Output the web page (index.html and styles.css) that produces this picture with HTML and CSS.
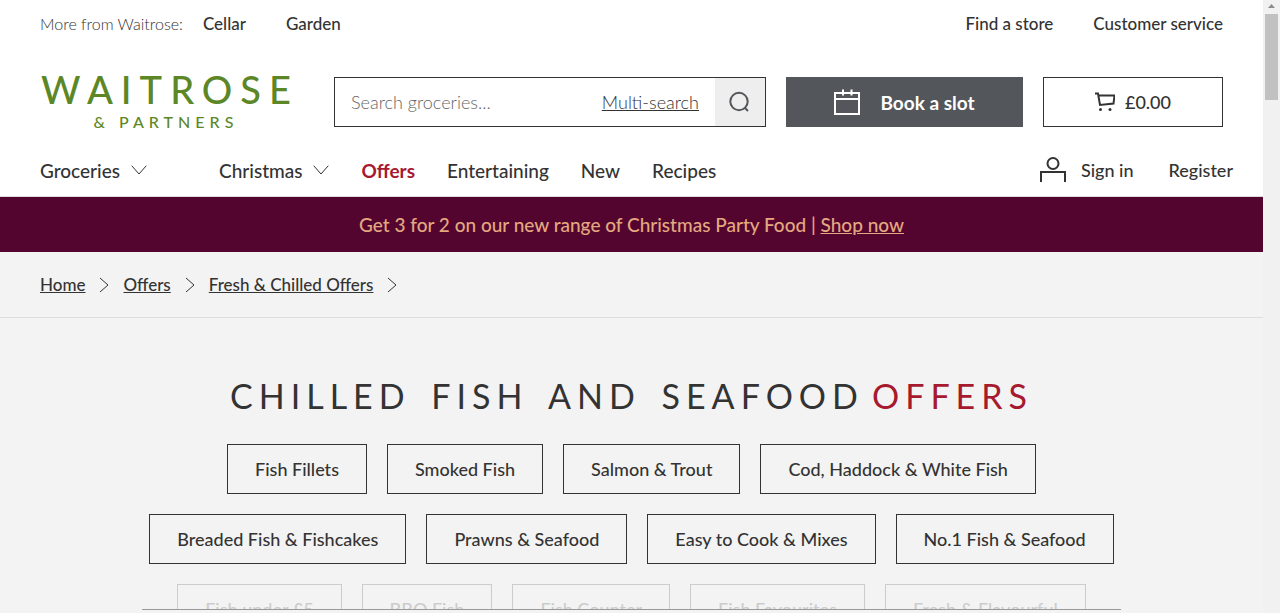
FILE: index.html
```
<!DOCTYPE html>
<html lang="en">
<head>
    <meta charset="UTF-8">
    <meta name="viewport" content="width=device-width, initial-scale=1.0">
    <title>Chilled Fish and Seafood Offers | Waitrose &amp; Partners</title>
    <link rel="stylesheet" href="styles.css">
</head>
<body>
<div class="page">
    <header>
        <div class="top-bar">
            <span class="more-from">More from Waitrose:</span>
            <a href="#">Cellar</a>
            <a href="#">Garden</a>
            <a href="#" class="push-right">Find a store</a>
            <a href="#">Customer service</a>
        </div>

        <div class="main-bar">
            <a href="#" class="logo">
                <span class="logo-name">WAITROSE</span>
                <span class="logo-sub">&amp; PARTNERS</span>
            </a>
            <form class="search">
                <input type="text" aria-label="Search groceries" placeholder="Search groceries...">
                <a href="#">Multi-search</a>
                <button type="button" aria-label="Search">
                    <svg width="22" height="22" viewBox="0 0 22 22">
                        <circle cx="10" cy="10.5" r="8.700"/>
                        <path d="M15.5 16.5l3.500 3.500"/>
                    </svg>
                </button>
            </form>
            <button type="button" class="book-slot">
                <svg width="26" height="26" viewBox="0 0 26 26">
                    <path d="M1 4h24v21H1zM1 10h24M9 0.5v6M17.5 0.5v6"/>
                </svg>
                Book a slot
            </button>
            <button type="button" class="trolley">
                <svg width="20" height="20" viewBox="0 0 20 20">
                    <path d="M0 1.5h3l2 11.5 13.500-1.500 1-8L3.500 3.200"/>
                    <circle cx="5.500" cy="17.500" r="1.500"/>
                    <circle cx="15" cy="17.500" r="1.500"/>
                </svg>
                £0.00
            </button>
        </div>

        <nav class="nav-bar">
            <button type="button" class="groceries">Groceries
                <svg width="16" height="10" viewBox="0 0 16 10"><path d="M0.700 0.700L8 9L15.300 0.700"/></svg>
            </button>
            <button type="button" class="christmas">Christmas
                <svg width="16" height="10" viewBox="0 0 16 10"><path d="M0.700 0.700L8 9L15.300 0.700"/></svg>
            </button>
            <a href="#" class="current">Offers</a>
            <a href="#">Entertaining</a>
            <a href="#">New</a>
            <a href="#">Recipes</a>
            <div class="account push-right">
                <a href="#" class="sign-in">
                    <svg width="26" height="26" viewBox="0 0 26 26">
                        <circle cx="13" cy="6.500" r="5.500"/>
                        <path d="M1 25V15h24v10"/>
                    </svg>
                    Sign in
                </a>
                <a href="#">Register</a>
            </div>
        </nav>
    </header>

    <div class="banner">
        <p>Get 3 for 2 on our new range of Christmas Party Food | <a href="#">Shop now</a></p>
    </div>

    <nav class="breadcrumbs" aria-label="Breadcrumb">
        <a href="#">Home</a>
        <svg width="10" height="16" viewBox="0 0 10 16"><path d="M1 1l8 7-8 7"/></svg>
        <a href="#">Offers</a>
        <svg width="10" height="16" viewBox="0 0 10 16"><path d="M1 1l8 7-8 7"/></svg>
        <a href="#">Fresh &amp; Chilled Offers</a>
        <svg width="10" height="16" viewBox="0 0 10 16"><path d="M1 1l8 7-8 7"/></svg>
    </nav>

    <main>
        <h1>CHILLED FISH AND SEAFOOD<span>OFFERS</span></h1>
        <div class="categories">
            <div class="row">
                <a href="#">Fish Fillets</a>
                <a href="#">Smoked Fish</a>
                <a href="#">Salmon &amp; Trout</a>
                <a href="#">Cod, Haddock &amp; White Fish</a>
            </div>
            <div class="row">
                <a href="#">Breaded Fish &amp; Fishcakes</a>
                <a href="#">Prawns &amp; Seafood</a>
                <a href="#">Easy to Cook &amp; Mixes</a>
                <a href="#">No.1 Fish &amp; Seafood</a>
            </div>
            <div class="row faded">
                <a href="#">Fish under £5</a>
                <a href="#">BBQ Fish</a>
                <a href="#">Fish Counter</a>
                <a href="#">Fish Favourites</a>
                <a href="#">Fresh &amp; Flavourful</a>
            </div>
        </div>
    </main>
</div>
<div class="scrollbar">
    <svg width="17" height="14" viewBox="0 0 17 14"><path d="M5 8l3.500-4L12 8z"/></svg>
    <div class="thumb"></div>
</div>
</body>
</html>
```

FILE: styles.css
```
* {
    box-sizing: border-box;
}

body {
    display: flex;
    margin: 0;
    font-family: Lato, "Gill Sans", sans-serif;
    font-size: 18px;
    font-weight: 500;
    color: #333;
    background-color: #f3f3f3;
}

a {
    color: inherit;
    text-decoration: none;
}

button {
    padding: 0;
    border: none;
    background: none;
    font: inherit;
    color: inherit;
    cursor: pointer;
}

svg {
    flex: none;
    fill: none;
    stroke: #333;
}

.page {
    flex: 1;
    min-width: 0;
}

header {
    background-color: #fff;
}

.push-right {
    margin-left: auto;
}

/* top links */
.top-bar {
    display: flex;
    align-items: center;
    gap: 40px;
    height: 46px;
    padding: 0 40px;
    font-size: 17px;
}

.more-from {
    margin-right: -20px;
    font-size: 16px;
    font-weight: 300;
}

/* logo, search, slot and trolley */
.main-bar {
    display: grid;
    grid-template-columns: 274px 1fr 237px 180px;
    gap: 20px;
    align-items: center;
    height: 98px;
    padding: 14px 40px 0;
}

.main-bar > form,
.main-bar > button {
    height: 50px;
}

.logo {
    display: flex;
    flex-direction: column;
    align-items: center;
    width: 252px;
    padding-top: 4px;
    color: #5c8727;
}

.logo-name {
    font-size: 38px;
    line-height: 36px;
    letter-spacing: 8px;
    margin-right: -8px;
}

.logo-sub {
    font-size: 16px;
    line-height: 30px;
    letter-spacing: 5px;
}

.search {
    display: flex;
    align-items: center;
    border: 1px solid #333;
    font-weight: 300;
}

.search input {
    flex: 1;
    min-width: 0;
    height: 100%;
    padding: 0 16px;
    border: none;
    outline: none;
    background: none;
    font: inherit;
}

.search input::placeholder {
    color: #666;
    opacity: 1;
}

.search a {
    text-decoration: underline;
}

.search button {
    display: flex;
    align-items: center;
    justify-content: center;
    width: 50px;
    height: 100%;
    margin-left: 16px;
    background-color: #eee;
}

.search svg {
    stroke: #53565a;
    stroke-width: 2;
}

.book-slot {
    display: flex;
    align-items: center;
    justify-content: center;
    gap: 20px;
    background-color: #53565a;
    color: #fff;
    font-size: 19px;
    font-weight: 700;
}

.book-slot svg {
    stroke: #fff;
    stroke-width: 2;
}

.trolley {
    display: flex;
    align-items: center;
    justify-content: center;
    gap: 10px;
}

.main-bar .trolley {
    border: 1px solid #333;
}

.trolley svg {
    stroke-width: 2;
}

.trolley circle {
    fill: #333;
    stroke: none;
}

/* navigation */
.nav-bar {
    display: flex;
    align-items: center;
    gap: 32px;
    height: 53px;
    padding: 0 30px 0 40px;
    border-bottom: 1px solid #ddd;
    font-size: 19px;
}

.nav-bar button {
    display: flex;
    align-items: center;
    gap: 11px;
}

.groceries {
    margin-right: 40px;
}

.nav-bar .current {
    color: #a6192e;
    font-weight: 700;
}

.account {
    display: flex;
    align-items: center;
    gap: 35px;
    font-size: 18px;
}

.sign-in {
    display: flex;
    align-items: center;
    gap: 15px;
}

.sign-in svg {
    stroke-width: 2;
}

.banner {
    display: flex;
    align-items: center;
    justify-content: center;
    height: 55px;
    background-color: #53052f;
    color: #e3a880;
    font-size: 19px;
}

.banner p {
    margin: 0;
}

.banner a {
    text-decoration: underline;
}

.breadcrumbs {
    display: flex;
    align-items: center;
    gap: 14px;
    height: 66px;
    padding: 0 40px;
    border-bottom: 1px solid #dcdedd;
    font-size: 17px;
}

.breadcrumbs a {
    text-decoration: underline;
}

/* heading and category links */
main {
    padding: 58px 20px 0;
}

h1 {
    display: flex;
    justify-content: center;
    gap: 8px;
    margin: 0 0 28px;
    font-size: 34px;
    font-weight: 400;
    line-height: 40px;
    letter-spacing: 6px;
    word-spacing: 6px;
}

h1 span {
    color: #a6192e;
}

.categories {
    max-width: 979px;
    max-height: 166px;
    margin: 0 auto;
    overflow: hidden;
    border-bottom: 1px solid #999;
}

.row {
    display: flex;
    justify-content: center;
    gap: 20px;
    margin-bottom: 20px;
}

.row a {
    padding: 0 27px;
    border: 1px solid #333;
    line-height: 48px;
    white-space: nowrap;
}

.faded {
    opacity: 0.2;
}

/* window scrollbar */
.scrollbar {
    position: sticky;
    top: 0;
    flex: none;
    width: 17px;
    height: 100vh;
    background-color: #f1f1f1;
}

.scrollbar svg {
    display: block;
    fill: #8c8c8c;
    stroke: none;
}

.thumb {
    height: 86px;
    margin: 0 2px;
    background-color: #c1c1c1;
}
```
